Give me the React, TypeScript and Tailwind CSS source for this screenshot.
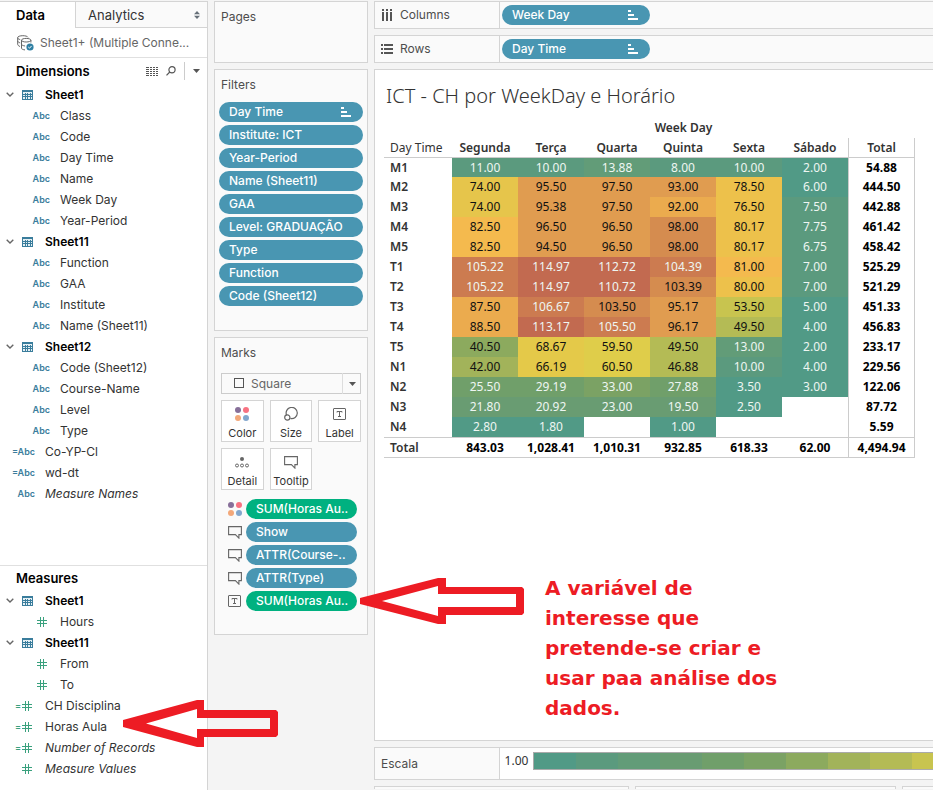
import React from "react";

const SANS = "font-['Inter','Liberation_Sans',sans-serif]";
const SHEET = "font-['Noto_Sans','Open_Sans',sans-serif]";

/* ---------- icons ---------- */

function TableIcon() {
  return (
    <svg width="11" height="10" viewBox="0 0 11 10" shapeRendering="crispEdges" aria-hidden="true">
      <path d="M0 0h11v10H0z" fill="#3a7d9c" />
      <path d="M1 2h9v1H1zM1 3h2v1H1zM1 5h2v1H1zM1 7h2v2H1zM4 3h1v1H4zM4 5h1v1H4zM4 7h1v2H4zM6 3h2v1H6zM6 5h2v1H6zM6 7h2v2H6zM9 3h1v1H9zM9 5h1v1H9zM9 7h1v2H9z" fill="#e6f0f4" />
    </svg>
  );
}

function HashIcon() {
  return (
    <svg width="10" height="10" viewBox="0 0 10 10" fill="none" stroke="#3aa17e" aria-hidden="true">
      <path d="M3.500 0v10M6.500 0v10M0 3.500h10M0 6.500h10" />
    </svg>
  );
}

function ChevronIcon() {
  return (
    <svg width="8" height="5" viewBox="0 0 8 5" fill="none" stroke="#666" strokeWidth="1.4" aria-hidden="true">
      <path d="M.7.7 4 4 7.300.7" />
    </svg>
  );
}

function DatabaseIcon() {
  return (
    <svg width="18" height="16" viewBox="0 0 18 16" fill="none" stroke="#666" aria-hidden="true">
      <path d="M3 11.500C1.700 11 .7 10.300.7 9.200V2.500C.7 1.500 3 .7 5.800.7c2.600 0 4.700.6 5.200 1.600M.7 2.700c0 1 1.200 1.600 2.500 1.900M.7 6c0 .8 1 1.500 2.500 1.900" />
      <path d="M4.500 5.200v8c0 .9 1.600 1.500 3.500 1.700M4.500 5.200c0-1 2.100-1.800 4.700-1.800s4.700.8 4.700 1.800-2.100 1.800-4.700 1.800-4.700-.8-4.700-1.800zM13.900 5.200v2.300M4.500 9.200c0 .9 1.700 1.600 3.600 1.800" />
      <circle cx="13" cy="12" r="3.600" fill="#2f7fa3" stroke="none" />
      <path d="m11.300 12 1.200 1.200 2.100-2.300" stroke="#fff" />
    </svg>
  );
}

function GridIcon() {
  return (
    <svg width="12" height="9" viewBox="0 0 12 9" fill="#555" shapeRendering="crispEdges" aria-hidden="true">
      <path d="M0 0h3v1H0zM4 0h2v1H4zM7 0h2v1H7zM10 0h2v1h-2zM0 2h3v1H0zM4 2h2v1H4zM7 2h2v1H7zM10 2h2v1h-2zM0 4h3v1H0zM4 4h2v1H4zM7 4h2v1H7zM10 4h2v1h-2zM0 6h3v1H0zM4 6h2v1H4zM7 6h2v1H7zM10 6h2v1h-2zM0 8h3v1H0zM4 8h2v1H4zM7 8h2v1H7zM10 8h2v1h-2z" />
    </svg>
  );
}

function SearchIcon() {
  return (
    <svg width="10" height="10" viewBox="0 0 10 10" fill="none" stroke="#555" strokeWidth="1.200" aria-hidden="true">
      <circle cx="6" cy="3.800" r="3.100" />
      <path d="M3.800 6 .5 9.300" />
    </svg>
  );
}

function CaretIcon() {
  return (
    <svg width="7" height="4" viewBox="0 0 7 4" fill="#555" aria-hidden="true">
      <path d="M0 0h7L3.500 4z" />
    </svg>
  );
}

function UpDownIcon() {
  return (
    <svg width="6" height="8" viewBox="0 0 6 8" fill="#666f78" aria-hidden="true">
      <path d="M0 3.200 3 0l3 3.200zM0 4.800 3 8l3-3.200z" />
    </svg>
  );
}

function SortIcon() {
  return (
    <svg width="10" height="10" viewBox="0 0 10 10" fill="#fff" shapeRendering="crispEdges" aria-hidden="true">
      <path d="M0 0h3v2H0zM0 4h6v2H0zM0 8h10v2H0z" />
    </svg>
  );
}

function DotsIcon() {
  return (
    <svg width="14" height="14" viewBox="0 0 14 14" aria-hidden="true">
      <circle cx="3" cy="3" r="3" fill="#876f99" />
      <circle cx="11" cy="3" r="3" fill="#f87281" />
      <circle cx="3" cy="11" r="3" fill="#f3a87a" />
      <circle cx="11" cy="11" r="3" fill="#83a7cd" />
    </svg>
  );
}

function SizeIcon() {
  return (
    <svg width="14" height="14" viewBox="0 0 14 14" fill="none" stroke="#666" strokeWidth="1.200" aria-hidden="true">
      <path d="M2.600 8.200a5.600 5.600 0 1 1 3.800 3.200" />
      <circle cx="3.300" cy="10.500" r="2.600" />
    </svg>
  );
}

function LabelIcon() {
  return (
    <svg width="13" height="12" viewBox="0 0 13 12" fill="none" stroke="#666" aria-hidden="true">
      <rect x=".5" y=".5" width="12" height="11" rx=".5" />
      <path d="M4 4.500v-1h5v1M6.500 3.500v5M5 8.500h3" />
    </svg>
  );
}

function DetailIcon() {
  return (
    <svg width="14" height="11" viewBox="0 0 14 11" fill="none" stroke="#666" aria-hidden="true">
      <circle cx="7" cy="2" r="2" fill="#666" stroke="none" />
      <circle cx="2" cy="8.500" r="1.500" />
      <circle cx="7" cy="8.500" r="1.500" />
      <circle cx="12" cy="8.500" r="1.500" />
    </svg>
  );
}

function TooltipIcon() {
  return (
    <svg width="14" height="13" viewBox="0 0 14 13" fill="none" stroke="#666" strokeWidth="1.100" aria-hidden="true">
      <path d="M.6.6h12.800v8h-2.500v3.500L7.400 8.600H.6z" />
    </svg>
  );
}

function ColumnsIcon() {
  return (
    <svg width="12" height="12" viewBox="0 0 12 12" fill="#555" shapeRendering="crispEdges" aria-hidden="true">
      <path d="M1 0h2v2H1zM5 0h2v2H5zM9 0h2v2H9zM1 3h2v9H1zM5 3h2v9H5zM9 3h2v9H9z" />
    </svg>
  );
}

function RowsIcon() {
  return (
    <svg width="12" height="10" viewBox="0 0 12 10" fill="#555" shapeRendering="crispEdges" aria-hidden="true">
      <path d="M0 0h2v2H0zM0 4h2v2H0zM0 8h2v2H0zM3 0h9v2H3zM3 4h9v2H3zM3 8h9v2H3z" />
    </svg>
  );
}

/* ---------- data pane ---------- */

type Kind = "sheet" | "abc" | "calc-abc" | "num" | "calc-num";
interface Field {
  kind: Kind;
  name: string;
  nested?: boolean;
  italic?: boolean;
}

const sheet = (name: string): Field => ({ kind: "sheet", name });
const abc = (name: string): Field => ({ kind: "abc", name, nested: true });
const num = (name: string): Field => ({ kind: "num", name, nested: true });

const dimensions: Field[] = [
  sheet("Sheet1"),
  ...["Class", "Code", "Day Time", "Name", "Week Day", "Year-Period"].map(abc),
  sheet("Sheet11"),
  ...["Function", "GAA", "Institute", "Name (Sheet11)"].map(abc),
  sheet("Sheet12"),
  ...["Code (Sheet12)", "Course-Name", "Level", "Type"].map(abc),
  { kind: "calc-abc", name: "Co-YP-Cl" },
  { kind: "calc-abc", name: "wd-dt" },
  { kind: "abc", name: "Measure Names", italic: true },
];

const measures: Field[] = [
  sheet("Sheet1"),
  num("Hours"),
  sheet("Sheet11"),
  num("From"),
  num("To"),
  { kind: "calc-num", name: "CH Disciplina" },
  { kind: "calc-num", name: "Horas Aula" },
  { kind: "calc-num", name: "Number of Records", italic: true },
  { kind: "num", name: "Measure Values", italic: true },
];

function FieldIcon({ kind }: { kind: Kind }) {
  if (kind === "abc" || kind === "calc-abc") {
    return (
      <span className="text-[9px] font-semibold text-[#3a7d9c]">{kind === "calc-abc" ? "=Abc" : "Abc"}</span>
    );
  }
  return (
    <span className="flex items-center gap-px text-[9px] font-semibold text-[#3aa17e]">
      {kind === "calc-num" && "="}
      <HashIcon />
    </span>
  );
}

function FieldList({ fields }: { fields: Field[] }) {
  return (
    <ul>
      {fields.map((f) =>
        f.kind === "sheet" ? (
          <li key={f.name}>
            <button type="button" className="flex h-[21px] w-full items-center pl-[6px] text-left font-semibold text-black">
              <span className="w-4">
                <ChevronIcon />
              </span>
              <span className="w-[23px]">
                <TableIcon />
              </span>
              {f.name}
            </button>
          </li>
        ) : (
          <li key={f.name} className="flex h-[21px] items-center">
            <span className={`flex justify-end ${f.nested ? "w-[50px]" : "w-[35px]"} ${f.kind.endsWith("num") ? "pr-[3px]" : ""}`}>
              <FieldIcon kind={f.kind} />
            </span>
            <span className={`pl-[10px] text-[#333] ${f.italic ? "italic" : ""}`}>{f.name}</span>
          </li>
        ),
      )}
    </ul>
  );
}

function DataPane() {
  return (
    <aside className="flex w-52 shrink-0 flex-col border-t border-r border-[#d4d4d4] bg-white">
      <div className="flex h-[26px] text-[13px]" role="tablist">
        <button type="button" role="tab" aria-selected="true" className="w-[75px] pl-4 text-left font-semibold text-black">
          Data
        </button>
        <button
          type="button"
          role="tab"
          aria-selected="false"
          className="flex flex-1 items-center justify-between border-b border-l border-[#d4d4d4] bg-[#fafafa] pr-[7px] pl-3 text-[#333]"
        >
          Analytics
          <UpDownIcon />
        </button>
      </div>
      <button type="button" className="flex h-[30px] items-center gap-[5px] border-b border-[#e0e0e0] pl-[17px] text-[#666]">
        <DatabaseIcon />
        Sheet1+ (Multiple Conne...
      </button>
      <section className="flex h-[507px] flex-col">
        <div className="flex h-[26px] items-center pr-[7px] pl-4">
          <h2 className="flex-1 text-[13px] font-semibold text-black">Dimensions</h2>
          <button type="button" aria-label="View data">
            <GridIcon />
          </button>
          <button type="button" aria-label="Find field" className="ml-2">
            <SearchIcon />
          </button>
          <button type="button" aria-label="Pane menu" className="ml-2 flex h-[18px] items-center border-l border-[#ccc] pl-2">
            <CaretIcon />
          </button>
        </div>
        <FieldList fields={dimensions} />
      </section>
      <section className="border-t border-[#e0e0e0]">
        <h2 className="flex h-6 items-center pl-4 text-[13px] font-semibold text-black">Measures</h2>
        <FieldList fields={measures} />
      </section>
    </aside>
  );
}

/* ---------- shelves and cards ---------- */

interface PillProps {
  label: string;
  sorted?: boolean;
  green?: boolean;
}

function Pill({ label, sorted, green }: PillProps) {
  return (
    <button
      type="button"
      className={`flex h-5 w-full min-w-0 items-center justify-between rounded-full pl-[10px] font-medium whitespace-nowrap text-white ${
        sorted ? "pr-3" : "pr-1"
      } ${green ? "bg-[#00b180]" : "bg-[#4996b2]"}`}
    >
      {label}
      {sorted && <SortIcon />}
    </button>
  );
}

const filters: PillProps[] = [
  { label: "Day Time", sorted: true },
  { label: "Institute: ICT" },
  { label: "Year-Period" },
  { label: "Name (Sheet11)" },
  { label: "GAA" },
  { label: "Level: GRADUAÇÃO" },
  { label: "Type" },
  { label: "Function" },
  { label: "Code (Sheet12)" },
];

const markButtons = [
  { label: "Color", icon: <DotsIcon /> },
  { label: "Size", icon: <SizeIcon /> },
  { label: "Label", icon: <LabelIcon /> },
  { label: "Detail", icon: <DetailIcon /> },
  { label: "Tooltip", icon: <TooltipIcon /> },
];

const markPills = [
  { label: "SUM(Horas Au..", green: true, icon: <DotsIcon /> },
  { label: "Show", icon: <TooltipIcon /> },
  { label: "ATTR(Course-..", icon: <TooltipIcon /> },
  { label: "ATTR(Type)", icon: <TooltipIcon /> },
  { label: "SUM(Horas Au..", green: true, icon: <LabelIcon /> },
];

const CARD = "border border-[#d4d4d4] bg-[#fafafa]";

function CardColumn() {
  return (
    <div className="flex w-[154px] shrink-0 flex-col gap-[6px]">
      <section className={`h-[62px] ${CARD}`}>
        <h2 className="px-[6px] pt-[5px] leading-5 text-[#4d4d4d]">Pages</h2>
      </section>
      <section className={`h-[262px] ${CARD}`}>
        <h2 className="px-[6px] pt-[5px] leading-5 text-[#4d4d4d]">Filters</h2>
        <div className="flex flex-col gap-[3px] px-1 pt-[7px]">
          {filters.map((p) => (
            <Pill key={p.label} {...p} />
          ))}
        </div>
      </section>
      <section className={`h-[298px] ${CARD}`}>
        <h2 className="px-[6px] pt-[5px] leading-5 text-[#4d4d4d]">Marks</h2>
        <div className="px-[6px] pt-[10px]">
          <div className="relative h-[21px]">
            <select
              aria-label="Mark type"
              defaultValue="Square"
              className="h-full w-full appearance-none border border-[#ccc] bg-[#fafafa] pl-[29px] text-[#666]"
            >
              <option>Square</option>
            </select>
            <span className="pointer-events-none absolute top-[5px] left-[13px] size-[10px] border border-[#555]" />
            <span className="pointer-events-none absolute inset-y-0 right-0 flex w-[19px] items-center justify-center border-l border-[#ddd]">
              <CaretIcon />
            </span>
          </div>
          <div className="grid grid-cols-3 gap-[6px] pt-[6px]">
            {markButtons.map((b) => (
              <button
                key={b.label}
                type="button"
                className="flex h-[42px] flex-col items-center justify-between border border-[#d4d4d4] bg-white pt-[6px] text-[11px] leading-4 text-[#333]"
              >
                <span className="flex h-[14px] items-center">{b.icon}</span>
                {b.label}
              </button>
            ))}
          </div>
          <div className="flex flex-col gap-[3px] pt-[9px] pr-1 pl-[7px]">
            {markPills.map((p, i) => (
              <div key={i} className="flex items-center">
                <span className="flex w-[18px] shrink-0 items-center">{p.icon}</span>
                <Pill label={p.label} green={p.green} />
              </div>
            ))}
          </div>
        </div>
      </section>
    </div>
  );
}

function Shelf({ label, icon, pill }: { label: string; icon: React.ReactNode; pill: string }) {
  return (
    <section className={`flex h-7 border-r-0 ${CARD}`}>
      <h2 className="flex w-[125px] shrink-0 items-center gap-[7px] border-r border-[#d4d4d4] pl-[6px] text-[#4d4d4d]">
        {icon}
        {label}
      </h2>
      <div className="w-[150px] py-[3px] pl-[2px]">
        <Pill label={pill} sorted />
      </div>
    </section>
  );
}

/* ---------- heat map ---------- */

const scale = [
  "#519a86", "#5b9a7e", "#629c78", "#699c72", "#709f6a", "#7ba264", "#8caa5e",
  "#a2b35a", "#b4bb55", "#c8c44f", "#dfcd4a", "#e4c949", "#e6c54b", "#edc14b",
  "#f4ba4e", "#ebab4e", "#e09c50", "#d58c4f", "#cc7b50", "#c26a50",
];

const MIN = 1;
const MAX = 115;

function bin(value: number) {
  return Math.min(scale.length - 1, Math.floor(((value - MIN) / (MAX - MIN)) * scale.length));
}

const days = ["Segunda", "Terça", "Quarta", "Quinta", "Sexta", "Sábado"];

const rows: [string, (number | null)[], string][] = [
  ["M1", [11, 10, 13.88, 8, 10, 2], "54.88"],
  ["M2", [74, 95.5, 97.5, 93, 78.5, 6], "444.50"],
  ["M3", [74, 95.38, 97.5, 92, 76.5, 7.5], "442.88"],
  ["M4", [82.5, 96.5, 96.5, 98, 80.17, 7.75], "461.42"],
  ["M5", [82.5, 94.5, 96.5, 98, 80.17, 6.75], "458.42"],
  ["T1", [105.22, 114.97, 112.72, 104.39, 81, 7], "525.29"],
  ["T2", [105.22, 114.97, 110.72, 103.39, 80, 7], "521.29"],
  ["T3", [87.5, 106.67, 103.5, 95.17, 53.5, 5], "451.33"],
  ["T4", [88.5, 113.17, 105.5, 96.17, 49.5, 4], "456.83"],
  ["T5", [40.5, 68.67, 59.5, 49.5, 13, 2], "233.17"],
  ["N1", [42, 66.19, 60.5, 46.88, 10, 4], "229.56"],
  ["N2", [25.5, 29.19, 33, 27.88, 3.5, 3], "122.06"],
  ["N3", [21.8, 20.92, 23, 19.5, 2.5, null], "87.72"],
  ["N4", [2.8, 1.8, null, 1, null, null], "5.59"],
];

const totals = ["843.03", "1,028.41", "1,010.31", "932.85", "618.33", "62.00"];

function HeatCell({ value }: { value: number | null }) {
  if (value === null) return <td />;
  const b = bin(value);
  const light = b < 6 || b > 17;
  return (
    <td className={light ? "text-[#eef6f2]" : "text-[#111]"} style={{ backgroundColor: scale[b] }}>
      {value.toFixed(2)}
    </td>
  );
}

function HeatTable() {
  return (
    <table className={`w-[531px] table-fixed border-separate border-spacing-0 text-center text-[12px] leading-[18px] ${SHEET}`}>
      <colgroup>
        <col className="w-[68px]" />
        {days.map((d) => (
          <col key={d} className="w-[66px]" />
        ))}
        <col className="w-[67px]" />
      </colgroup>
      <thead className="text-[#333]">
        <tr>
          <td className="h-5" />
          <th colSpan={7} className="h-5 font-semibold">
            Week Day
          </th>
        </tr>
        <tr>
          <th className="h-5 border-b border-[#ccc] pl-[6px] text-left font-normal">Day Time</th>
          {days.map((d) => (
            <th key={d} className="h-5 border-b border-[#ccc] font-semibold">
              {d}
            </th>
          ))}
          <th className="h-5 border-x border-b border-[#ccc] font-semibold">Total</th>
        </tr>
      </thead>
      <tbody>
        {rows.map(([label, values, total]) => (
          <tr key={label} className="h-5 first:h-[19px]">
            <th className="pl-[6px] text-left font-semibold text-[#333]">{label}</th>
            {values.map((v, i) => (
              <HeatCell key={i} value={v} />
            ))}
            <td className="border-x border-[#ccc] font-bold text-black">{total}</td>
          </tr>
        ))}
      </tbody>
      <tfoot className="font-bold text-black">
        <tr className="h-[21px]">
          <th className="border-y border-[#ccc] pl-[6px] text-left font-semibold text-[#333]">Total</th>
          {totals.map((t) => (
            <td key={t} className="border-y border-[#ccc]">
              {t}
            </td>
          ))}
          <td className="border border-[#ccc]">4,494.94</td>
        </tr>
      </tfoot>
    </table>
  );
}

function Worksheet() {
  return (
    <div className="flex min-w-0 flex-1 flex-col gap-[6px]">
      <Shelf label="Columns" icon={<ColumnsIcon />} pill="Week Day" />
      <Shelf label="Rows" icon={<RowsIcon />} pill="Day Time" />
      <main className="h-[672px] border border-r-0 border-[#d4d4d4] bg-white pl-[9px]">
        <h1 className="pt-[10px] pb-[7px] pl-[2px] font-['Noto_Sans','Open_Sans',sans-serif] text-[20px] leading-[31px] font-light text-[#333]">
          ICT - CH por WeekDay e Horário
        </h1>
        <HeatTable />
        <p className="mt-[115px] ml-[161px] w-[248px] font-['DejaVu_Sans','Inter',sans-serif] text-[20px] leading-[30px] font-bold text-[#ed1c24]">
          A variável de interesse que pretende-se criar e usar paa análise dos dados.
        </p>
      </main>
      <section className="flex h-[33px] overflow-hidden border border-r-0 border-[#d4d4d4] bg-white">
        <h2 className="flex w-[125px] shrink-0 items-center border-r border-[#d4d4d4] bg-[#fafafa] pl-[6px] text-[#4d4d4d]">
          Escala
        </h2>
        <span className={`w-[33px] shrink-0 pt-1 text-center text-[12px] leading-[18px] text-[#333] ${SHEET}`}>1.00</span>
        <div className="mt-1 flex h-[18px] shrink-0 border border-[#aaa]">
          {scale.map((c) => (
            <span key={c} className="w-[42px]" style={{ backgroundColor: c }} />
          ))}
        </div>
      </section>
      <div className="flex h-[3px] gap-[6px] overflow-hidden">
        <div className="h-5 w-[255px] shrink-0 border border-[#d4d4d4] bg-[#fafafa]" />
        <div className="h-5 w-[261px] shrink-0 border border-[#d4d4d4] bg-[#fafafa]" />
        <div className="h-5 flex-1 border border-r-0 border-[#d4d4d4] bg-[#fafafa]" />
      </div>
    </div>
  );
}

export default function App() {
  return (
    <div className={`relative flex h-screen gap-[6px] overflow-hidden bg-[#f4f4f4] pt-px text-[12px] leading-4 ${SANS}`}>
      <DataPane />
      <CardColumn />
      <Worksheet />
      <svg className="absolute top-[700px] left-[123px]" width="155" height="47" viewBox="0 0 155 47" aria-hidden="true">
        <path
          fill="#ed1c24"
          fillRule="evenodd"
          d="M0 20 74 0h7v10h72l2 2v23l-2 2H81v10h-7L0 27zM23 23.500 74 38v-9h73V18H74V9z"
        />
      </svg>
      <svg className="absolute top-[578px] left-[360px]" width="164" height="46" viewBox="0 0 164 46" aria-hidden="true">
        <path
          fill="#ed1c24"
          fillRule="evenodd"
          d="M0 20 78 0h8v9h76l2 2v24l-2 2H86v9h-8L0 26zM22 23 78 38v-9h78V16H78V8z"
        />
      </svg>
    </div>
  );
}
